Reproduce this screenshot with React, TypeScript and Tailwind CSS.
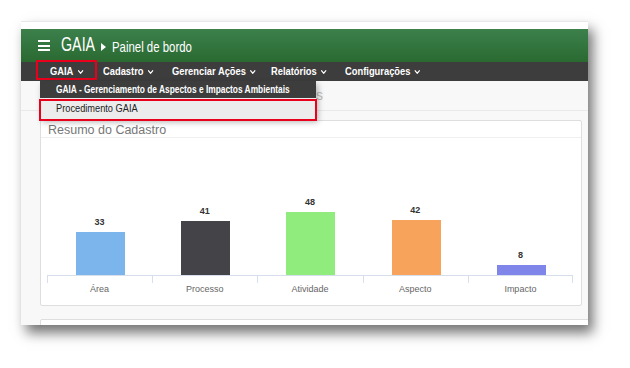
import { ChevronDown } from "lucide-react";

const bars = [
  { label: "Área", value: 33, color: "bg-[#7cb5ec]" },
  { label: "Processo", value: 41, color: "bg-[#434348]" },
  { label: "Atividade", value: 48, color: "bg-[#90ed7d]" },
  { label: "Aspecto", value: 42, color: "bg-[#f7a35c]" },
  { label: "Impacto", value: 8, color: "bg-[#8085e9]" },
];

const navItems = [
  { label: "Cadastro", w: "w-[69px]" },
  { label: "Gerenciar Ações", w: "w-[99px]" },
  { label: "Relatórios", w: "w-[74px]" },
  { label: "Configurações", w: "w-[90px]" },
];

export default function App() {
  return (
    <div className="w-[630px] h-[368px] bg-white pt-[21px] pl-[21px] font-['Liberation_Sans',Arial,sans-serif]">
      {/* Window */}
      <div className="relative w-[567px] h-[304px] bg-[#f8f8f8] shadow-[5px_8px_12px_rgba(0,0,0,0.55)] flex flex-col">
        <div className="h-[8px] shrink-0 bg-white border-t border-[#e6e8eb]" />

        {/* Header */}
        <div className="h-[33px] shrink-0 bg-gradient-to-b from-[#3c804c] to-[#2a6a31] flex items-center pl-[17px] text-white">
          <div className="flex flex-col gap-[2.5px] w-[12px]">
            <span className="h-[2px] bg-white" />
            <span className="h-[2px] bg-white" />
            <span className="h-[2px] bg-white" />
          </div>
          <div className="ml-[11px] w-[34px] whitespace-nowrap">
            <span className="inline-block origin-left scale-x-[0.68] text-[21px] leading-none">GAIA</span>
          </div>
          <svg width="5" height="8" viewBox="0 0 5 8" className="ml-[6px] mt-[3px]">
            <polygon points="0,0 5,4 0,8" fill="white" />
          </svg>
          <div className="ml-[6px] mt-[2px] whitespace-nowrap">
            <span className="inline-block origin-left scale-x-[0.76] text-[15px] leading-none">Painel de bordo</span>
          </div>
        </div>

        {/* Nav */}
        <div className="h-[19px] shrink-0 bg-[#3d3d3d] flex pl-[29px] text-white text-[11px] font-bold whitespace-nowrap">
          <div className="relative w-[53px] h-full flex items-center">
            <span className="inline-flex items-center gap-[3px] origin-left scale-x-[0.85]">
              GAIA
              <ChevronDown size={10} strokeWidth={3} />
            </span>
            <span className="absolute left-[-14px] top-[-2px] w-[61px] h-[20px] border-2 border-[#e8001c]" />
          </div>
          {navItems.map((n) => (
            <div key={n.label} className={`${n.w} h-full flex items-center`}>
              <span className="inline-flex items-center gap-[3px] origin-left scale-x-[0.85]">
                {n.label}
                <ChevronDown size={10} strokeWidth={3} />
              </span>
            </div>
          ))}
        </div>

        {/* Content */}
        <div className="flex-1 flex flex-col pl-[19px] overflow-hidden">
          <div className="h-[30px] shrink-0 -ml-[19px] border-b border-[#e9e9e9] flex items-center">
            <div className="w-[302px] text-right whitespace-nowrap overflow-hidden text-[14px] text-[#bdbdbd]">
              Painel de Bordo - Resumo dos Cadastros
            </div>
          </div>

          <div className="mt-[9px] shrink-0 w-[542px] h-[186px] bg-white border border-[#dedede] rounded-[2px] flex flex-col">
            <div className="h-[17px] shrink-0 border-b border-[#efefef] pl-[7px] pt-[2px] text-[12.5px] leading-[14px] text-[#777]">
              Resumo do Cadastro
            </div>
            <div className="flex-1 flex flex-col pl-[6px]">
              <div className="w-[526px] flex-1 grid grid-cols-5">
                {bars.map((b) => (
                  <div key={b.label} className="flex flex-col items-center justify-end">
                    <span className="text-[9px] font-bold text-[#333] leading-[10px] mb-[4px]">{b.value}</span>
                    <div
                      className={`${b.color} w-[51px] ml-[2px] border border-white border-b-0`}
                      style={{ height: Math.round(b.value * 1.333) }}
                    />
                  </div>
                ))}
              </div>
              <div className="w-[526px] grid grid-cols-5 border-t border-[#d8dfec]">
                {bars.map((b, i) => (
                  <div key={b.label} className={`h-[7px] border-l border-[#d8dfec] ${i === 4 ? "border-r" : ""}`} />
                ))}
              </div>
              <div className="w-[526px] grid grid-cols-5 text-[9px] text-[#666] text-center leading-[12px] mb-[10px]">
                {bars.map((b) => (
                  <span key={b.label}>{b.label}</span>
                ))}
              </div>
            </div>
          </div>

          <div className="mt-[13px] shrink-0 h-[20px] bg-white border border-[#dedede] -mr-[2px] rounded-tl-[2px]" />
        </div>

        {/* Dropdown */}
        <div className="absolute left-[19px] top-[60px] w-[276px] bg-[#3d3d3d] shadow-[2px_3px_6px_rgba(0,0,0,0.3)] text-[11px] whitespace-nowrap">
          <div className="h-[17px] pl-[16px] flex items-center text-white font-bold">
            <span className="inline-block origin-left scale-x-[0.76]">
              GAIA - Gerenciamento de Aspectos e Impactos Ambientais
            </span>
          </div>
          <div className="relative h-[21px] bg-[#ececec] pl-[16px] flex items-center text-[#222]">
            <span className="inline-block origin-left scale-x-[0.84]">Procedimento GAIA</span>
            <span className="absolute left-[-1px] right-[-1px] top-[1px] bottom-[-2px] border-2 border-[#e8001c]" />
          </div>
        </div>
      </div>
    </div>
  );
}
